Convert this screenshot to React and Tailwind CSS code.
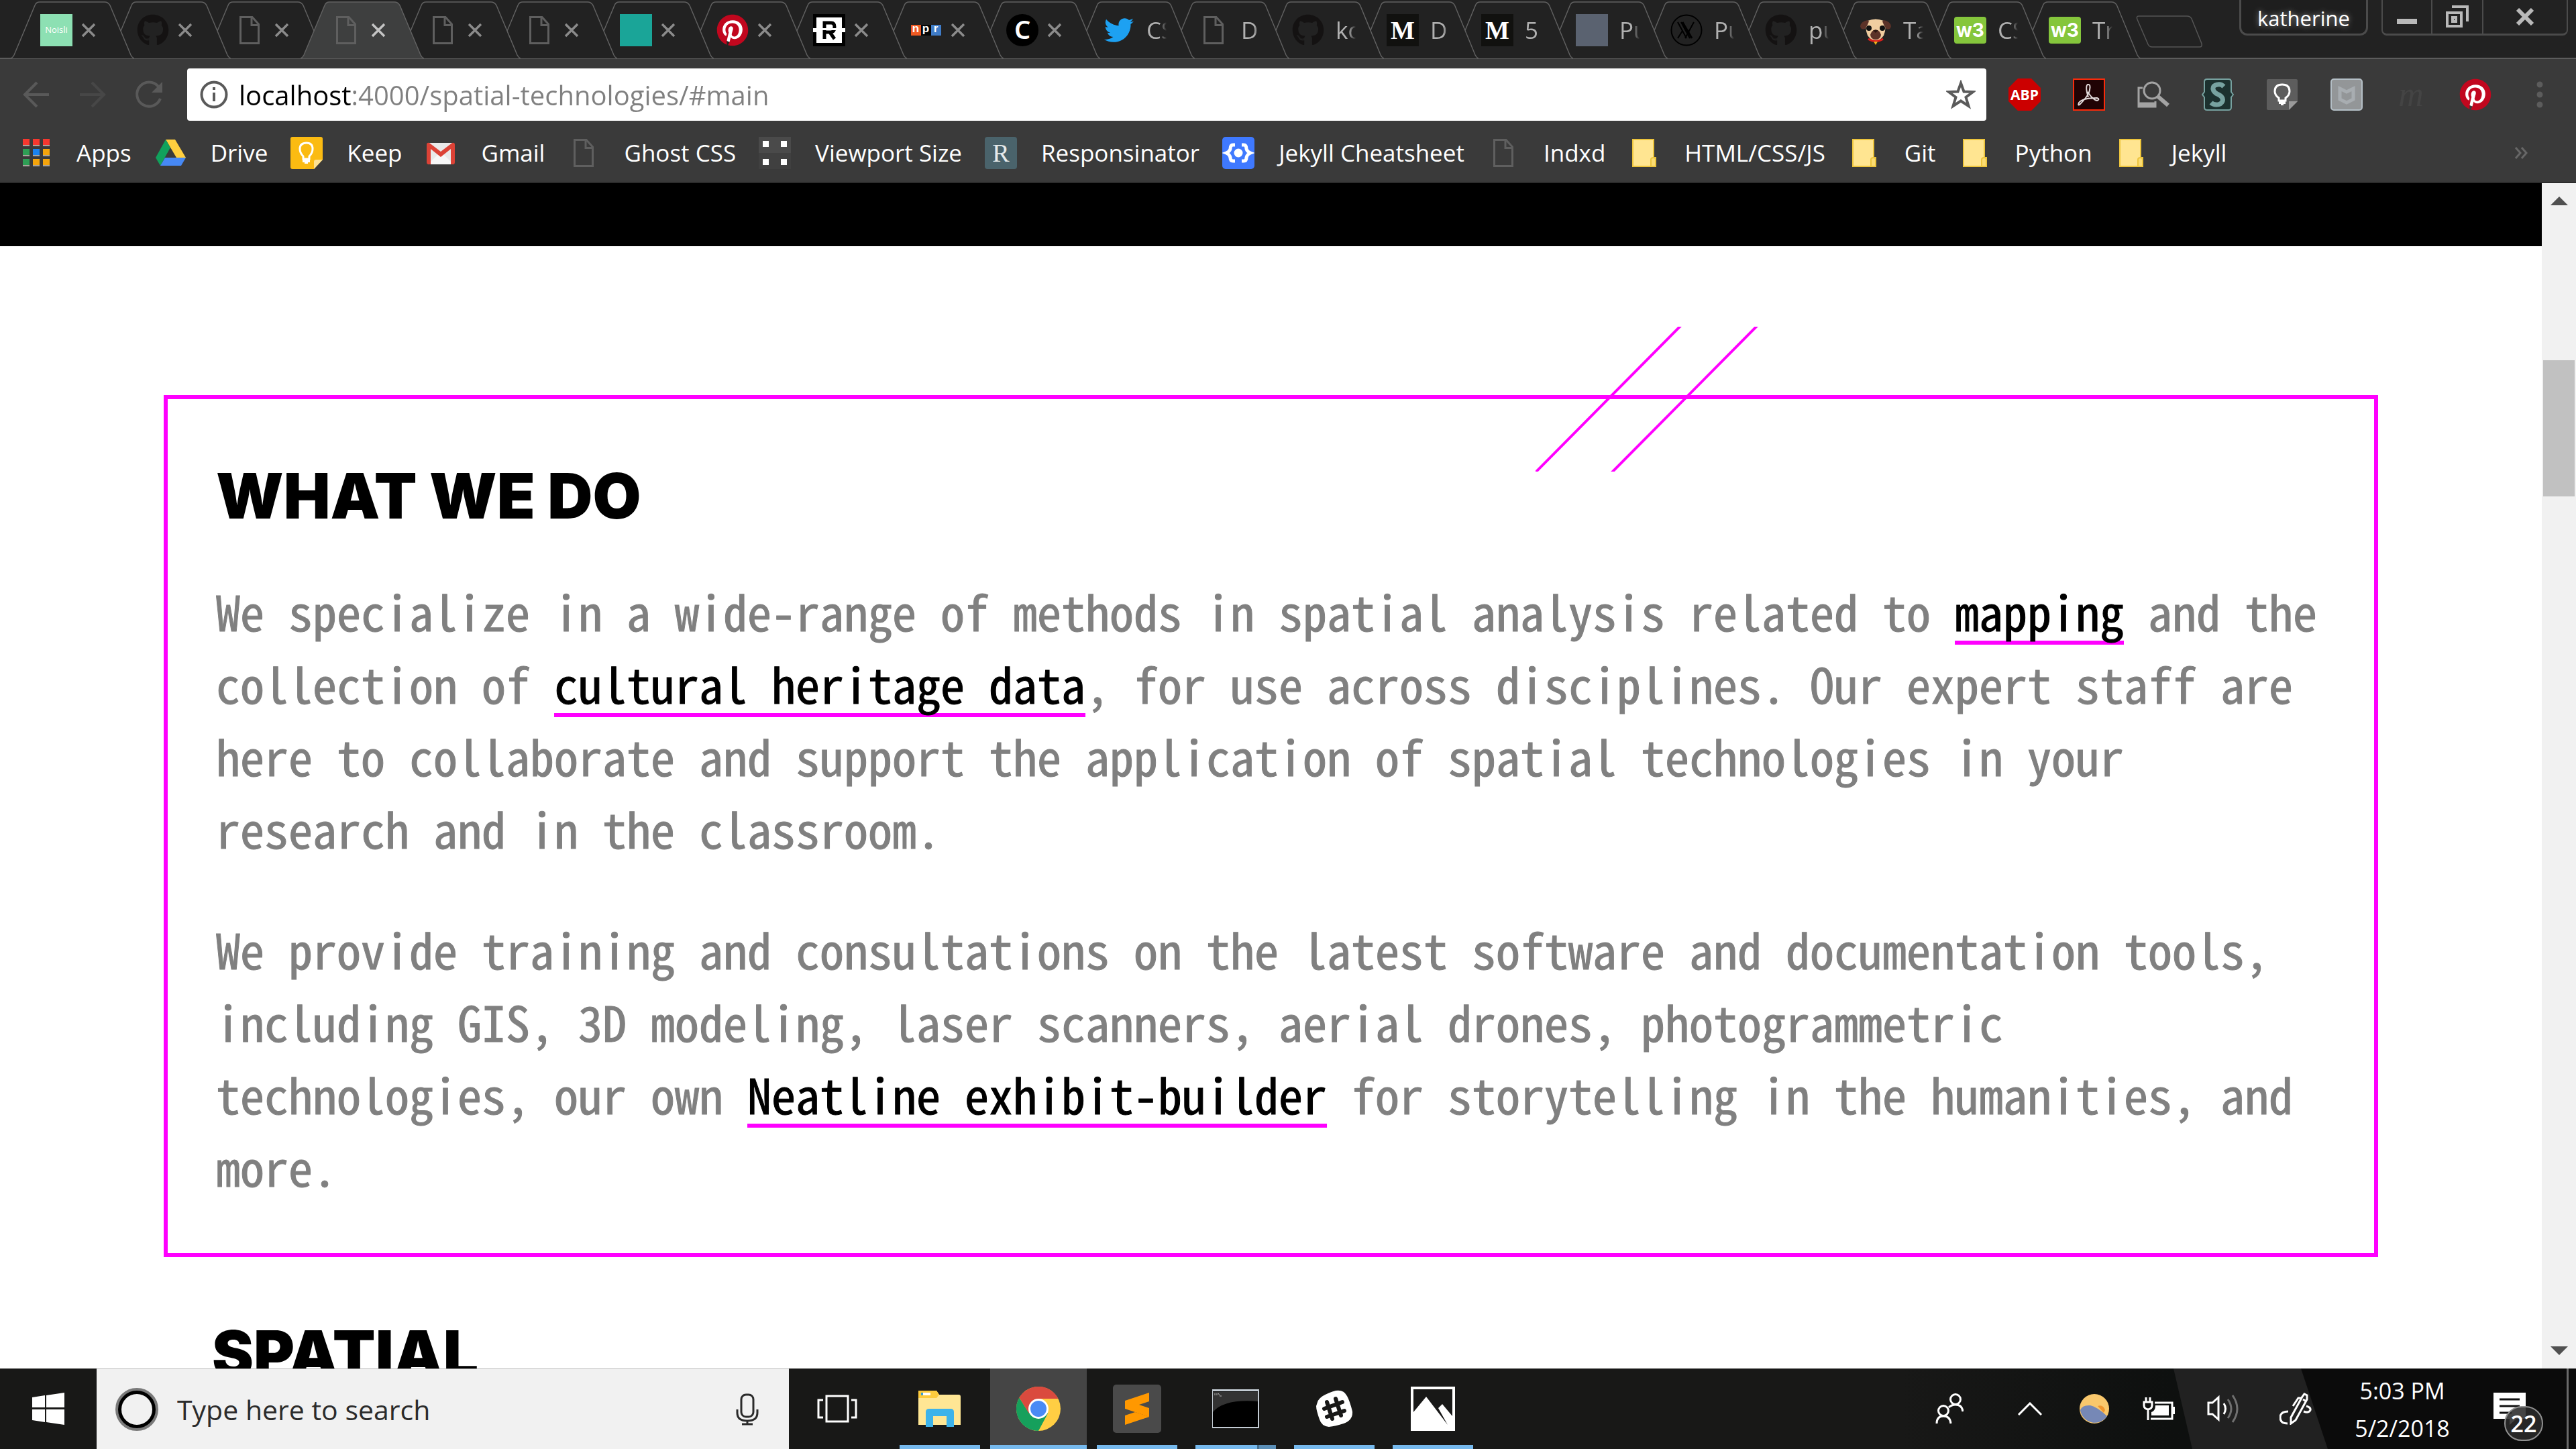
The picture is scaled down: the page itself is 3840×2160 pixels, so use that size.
import React from "react";
import { FaGithub, FaTwitter, FaPinterest } from "react-icons/fa";

/* ---------- favicons ---------- */

const PageIcon = ({ stroke = "#5f5f5f" }) => (
  <svg viewBox="0 0 48 48" className="h-12 w-12" fill="none" stroke={stroke} strokeWidth="3" aria-hidden="true">
    <path d="M10.500 4.500H28L37.500 15V43.500H10.500Z" />
    <path d="M27 4.500V16.500H37.500" />
  </svg>
);

const Github = () => <FaGithub className="h-12 w-12 text-[#141212]" aria-hidden="true" />;

const Noisli = () => (
  <span className="flex h-12 w-12 items-center justify-center bg-[#8de0b3] text-[13px] text-white">Noisli</span>
);

const Teal = () => <span className="block h-12 w-12 bg-[#1aa598]" />;
const Slate = () => <span className="block h-12 w-12 bg-[#5a6270]" />;

const Pinterest = () => (
  <span className="relative flex h-12 w-12 items-center justify-center">
    <span className="absolute inset-1.5 rounded-full bg-white" />
    <FaPinterest className="relative h-12 w-12 text-[#c1071e]" aria-hidden="true" />
  </span>
);

const RLogo = () => (
  <svg viewBox="0 0 48 48" className="h-12 w-12" aria-hidden="true">
    <path d="M0 0H48V48H0Z" fill="#000" />
    <path d="M5 5H43V43H5Z" fill="#fff" />
    <path d="M17 37V13H27Q32 13 32 19Q32 27 26 27H17M25 27L32 37" fill="none" stroke="#000" strokeWidth="5" />
    <path d="M0 21H14V27H0ZM35 21H48V27H35ZM14 21H35V24H14Z" fill="#fff" />
  </svg>
);

const Npr = () => (
  <span className="flex h-12 w-12 items-center justify-center font-['Liberation_Sans'] text-[17px] leading-[14px] font-bold text-white">
    <span className="flex h-4 w-[15px] items-center justify-center bg-[#f05a22] pb-1">n</span>
    <span className="flex h-4 w-[15px] items-center justify-center bg-[#050505] pb-1">p</span>
    <span className="flex h-4 w-[15px] items-center justify-center bg-[#3f7cc8] pb-1">r</span>
  </span>
);

const CLogo = () => (
  <span className="flex h-12 w-12 items-center justify-center rounded-full bg-black pb-1 font-['Noto_Sans'] text-[38px] leading-[40px] font-semibold text-white">
    C
  </span>
);

const Twitter = () => <FaTwitter className="h-11 w-12 text-[#1da1f2]" aria-hidden="true" />;

const Medium = () => (
  <span className="flex h-12 w-12 items-center justify-center bg-[#11110f] font-['Liberation_Serif'] text-[38px] leading-[40px] font-bold text-white">
    M
  </span>
);

const XLogo = () => (
  <svg viewBox="0 0 48 48" className="h-12 w-12" fill="none" stroke="#000" aria-hidden="true">
    <circle cx="24" cy="24" r="22.500" strokeWidth="2" />
    <path d="M11 12L24 36M16 12L29 36M35 12L22 36M11 36L18 25" strokeWidth="2" />
    <path d="M18 12L32 36" strokeWidth="3" />
  </svg>
);

const Pug = () => (
  <svg viewBox="0 0 48 48" className="h-12 w-12" aria-hidden="true">
    <path d="M12 10Q24 5 36 10Q41 20 36 32Q30 40 24 40Q18 40 12 32Q7 20 12 10Z" fill="#f0cda0" />
    <path d="M12 9Q2 11 1 18Q2 24 8 22Q12 17 14 11Z" fill="#5b3228" />
    <path d="M36 9Q46 11 47 18Q46 24 40 22Q36 17 34 11Z" fill="#5b3228" />
    <path d="M24 23Q30 24 32 31Q31 38 24 38Q17 38 16 31Q18 24 24 23Z" fill="#5b3228" />
    <circle cx="14" cy="21" r="4" fill="#111" />
    <circle cx="34" cy="21" r="4" fill="#111" />
    <path d="M20 24H28L24 28Z" fill="#2b1511" />
    <path d="M13 37Q24 44 35 37" fill="none" stroke="#d8201c" strokeWidth="3" />
    <path d="M21 41H27L24 46Z" fill="#f1b21b" />
  </svg>
);

const W3 = () => (
  <span className="flex h-12 w-12 items-center justify-center">
    <span className="flex h-10 w-12 items-center justify-center rounded bg-[#85c63c] font-['Inter'] text-[28px] leading-[36px] font-bold text-white">
      w3
    </span>
  </span>
);

/* ---------- bookmark icons ---------- */

const AppsIcon = () => (
  <svg viewBox="0 0 48 48" className="h-12 w-12" aria-hidden="true">
    {[
      ["#f6382f", "#f6382f", "#f6382f"],
      ["#2f9e55", "#1a83f0", "#f5a40c"],
      ["#2f9e55", "#f5a40c", "#f5a40c"],
    ].map((row, r) =>
      row.map((c, i) => (
        <g key={`${r}-${i}`}>
          <rect x={4 + i * 15} y={3 + r * 15} width="10" height="10" fill={c} />
          <rect x={4 + i * 15} y={12 + r * 15} width="10" height="2" fill="#a9a39c" />
        </g>
      ))
    )}
  </svg>
);

const DriveIcon = () => (
  <svg viewBox="0 0 48 48" className="h-12 w-12" aria-hidden="true">
    <path d="M17 4H31L47 31H33Z" fill="#ffcf3f" />
    <path d="M17 4L24 16L9 43L2 31Z" fill="#11a15c" />
    <path d="M16 31H47L40 43H9Z" fill="#4688f4" />
    <path d="M24 17L32 31H16Z" fill="#3a3a3a" />
  </svg>
);

const KeepIcon = () => (
  <svg viewBox="0 0 48 48" className="h-12 w-12" aria-hidden="true">
    <path d="M3 0H45Q48 0 48 3V34L35 48H3Q0 48 0 45V3Q0 0 3 0Z" fill="#fbbb12" />
    <path d="M48 34L35 48V37Q35 34 38 34Z" fill="#fde293" />
    <path d="M19 29Q14 24 14 18Q14 9 24 9Q33 9 33 18Q33 24 28 29V33H19Z" fill="none" stroke="#fff" strokeWidth="3" />
    <path d="M18 34H29V38H26V40H21V38H18Z" fill="#fff" />
  </svg>
);

const GmailIcon = () => (
  <svg viewBox="0 0 48 48" className="h-12 w-12" aria-hidden="true">
    <path d="M5 9H43V41H5Z" fill="#e9e9e9" />
    <path d="M5 41L20 26H28L43 41Z" fill="#f7f7f7" />
    <path d="M3 12Q3 8 7 9L24 22L41 9Q45 8 45 12V38Q45 41 42 41H39V18L24 30L9 18V41H6Q3 41 3 38Z" fill="#dc4236" />
  </svg>
);

const ViewportIcon = () => (
  <svg viewBox="0 0 48 48" className="h-12 w-12" aria-hidden="true">
    <rect width="48" height="48" fill="#4a4a4a" />
    <rect width="48" height="24" y="24" fill="#404040" />
    <path d="M6 6H15V15H6ZM33 6H42V15H33ZM6 33H15V42H6ZM33 33H42V42H33Z" fill="#fff" />
  </svg>
);

const ResponsinatorIcon = () => (
  <span className="flex h-12 w-12 items-center justify-center rounded bg-[#4a636b] font-['Liberation_Serif'] text-[38px] leading-[48px] text-[#e6eaea]">
    R
  </span>
);

const JekyllIcon = () => (
  <svg viewBox="0 0 48 48" className="h-12 w-12" aria-hidden="true">
    <rect width="48" height="48" rx="5" fill="#3f79ff" />
    <path d="M19 12H16Q12 12 12 18Q11 22 6 24Q11 26 12 31Q12 36 16 36H19M29 12H32Q36 12 36 18Q37 22 42 24Q37 26 36 31Q36 36 32 36H29" fill="none" stroke="#fff" strokeWidth="5" />
    <circle cx="24" cy="24" r="6.500" fill="#fff" />
  </svg>
);

const FolderIcon = () => (
  <svg viewBox="0 0 48 48" className="h-12 w-12" aria-hidden="true">
    <path d="M7 4H38V31H41V44H7Z" fill="#ffe591" stroke="#edc53d" strokeWidth="2" />
    <path d="M34 44V34Q34 31 38 31Q41 31 41 34V44Z" fill="#fbdc73" stroke="#edc53d" strokeWidth="2" />
  </svg>
);

/* ---------- extension icons ---------- */

const AbpIcon = () => (
  <span className="flex h-12 w-12 items-center justify-center bg-[#cc0000] text-[21px] leading-[24px] font-bold text-white [clip-path:polygon(29%_0,71%_0,100%_29%,100%_71%,71%_100%,29%_100%,0_71%,0_29%)]">
    ABP
  </span>
);

const AcrobatIcon = () => (
  <svg viewBox="0 0 48 48" className="h-12 w-12" fill="none" aria-hidden="true">
    <rect x="1" y="1" width="46" height="46" fill="#200304" stroke="#fa2a0a" strokeWidth="2" />
    <path d="M23 28Q18 12 22 9Q27 8 25 17Q24 25 10 39Q7 41 9 36Q14 29 36 29Q41 31 36 33Q30 32 22 20" stroke="#e2dada" strokeWidth="2" />
  </svg>
);

const SearchPageIcon = () => (
  <svg viewBox="0 0 48 48" className="h-12 w-12" fill="none" stroke="#a3a3a3" aria-hidden="true">
    <path d="M8 14H2V42H27V34" strokeWidth="3" />
    <path d="M2 39H27" strokeWidth="7" />
    <circle cx="22" cy="18" r="12" strokeWidth="3" />
    <path d="M31 27L46 40" strokeWidth="6" />
  </svg>
);

const StylishIcon = () => (
  <svg viewBox="0 0 48 48" className="h-12 w-12" fill="none" aria-hidden="true">
    <path d="M8 1H40Q44 1 44 5V20L47 24L44 28V43Q44 47 40 47H8Q4 47 4 43V28L1 24L4 20V5Q4 1 8 1Z" fill="#1c312f" stroke="#77a2a0" strokeWidth="2" />
    <path d="M33 12Q29 8 24 9Q16 10 17 16Q18 21 25 24Q33 28 31 34Q29 39 22 39Q17 39 14 36" stroke="#77a2a0" strokeWidth="7" />
  </svg>
);

const KeepExtIcon = () => (
  <svg viewBox="0 0 48 48" className="h-12 w-12" fill="none" aria-hidden="true">
    <path d="M3 1H45Q47 1 47 3V34L34 47H3Q1 47 1 45V3Q1 1 3 1Z" fill="#5d5d5d" />
    <path d="M47 34L34 47V34Z" fill="#9a9a9a" />
    <path d="M19 29Q13 25 13 19Q13 9 24 9Q35 9 35 19Q35 25 29 29V33H19Z" stroke="#fff" strokeWidth="3" />
    <path d="M19 34H29V38H26V40H22V38H19Z" fill="#fff" />
  </svg>
);

const ShieldIcon = () => (
  <svg viewBox="0 0 48 48" className="h-12 w-12" fill="none" aria-hidden="true">
    <rect x="1" y="1" width="46" height="46" rx="4" fill="#939698" stroke="#b4bfc6" strokeWidth="2" />
    <path d="M14 15L24 20L34 15V31L24 36L14 31Z" stroke="#a8adb1" strokeWidth="5" />
  </svg>
);

const EmIcon = () => (
  <span className="flex h-12 w-12 items-center justify-center font-['Liberation_Serif'] text-[52px] leading-[48px] text-[#444444] italic">m</span>
);

const DotsIcon = () => (
  <svg viewBox="0 0 48 48" className="h-12 w-12" fill="#5c5c5c" aria-hidden="true">
    <circle cx="24" cy="9" r="4.500" />
    <circle cx="24" cy="24" r="4.500" />
    <circle cx="24" cy="39" r="4.500" />
  </svg>
);

/* ---------- tab strip ---------- */

const WIDE = "w-[184px]";
const SLIM = "w-[181px]";

const tabs = [
  { icon: Noisli, name: "Noisli", size: WIDE },
  { icon: Github, name: "GitHub", size: WIDE },
  { icon: PageIcon, name: "Page", size: WIDE },
  { icon: PageIcon, name: "Spatial Technologies", size: WIDE, active: true },
  { icon: PageIcon, name: "Page", size: WIDE },
  { icon: PageIcon, name: "Page", size: WIDE },
  { icon: Teal, name: "Teal", size: WIDE },
  { icon: Pinterest, name: "Pinterest", size: WIDE },
  { icon: RLogo, name: "R", size: WIDE },
  { icon: Npr, name: "NPR", size: WIDE },
  { icon: CLogo, name: "C", size: WIDE },
  { icon: Twitter, title: "CS", size: SLIM },
  { icon: PageIcon, title: "D", size: SLIM },
  { icon: Github, title: "ko", size: SLIM },
  { icon: Medium, title: "D", size: SLIM },
  { icon: Medium, title: "5", size: SLIM },
  { icon: Slate, title: "Pu", size: SLIM },
  { icon: XLogo, title: "Pu", size: SLIM },
  { icon: Github, title: "pu", size: SLIM },
  { icon: Pug, title: "Ta", size: SLIM },
  { icon: W3, title: "CS", size: SLIM },
  { icon: W3, title: "Tr", size: SLIM },
];

function Tab({ tab, index }) {
  const Icon = tab.icon;
  return (
    <button
      type="button"
      aria-label={tab.title ? undefined : tab.name}
      className={`relative -mr-10 flex h-[87px] shrink-0 items-center pt-[3px] pl-11 ${tab.size}`}
      style={{ zIndex: tab.active ? 40 : 30 - index }}
    >
      <svg viewBox="0 0 184 87" preserveAspectRatio="none" className="absolute inset-0 h-full w-full" aria-hidden="true">
        <path
          d="M0 87Q3 86 5 82L36 8Q38 3 43 3H140Q145 3 148 8L179 82Q181 86 184 87"
          fill={tab.active ? "#3e3f3f" : "#222222"}
          stroke="#616161"
          strokeWidth="1.500"
        />
      </svg>
      <span className="relative">
        <Icon />
      </span>
      {tab.title ? (
        <span className="relative ml-[17px] w-[30px] overflow-hidden text-left text-[35px] leading-[48px] whitespace-nowrap text-[#b0b0b0] [mask-image:linear-gradient(to_right,black_65%,transparent)]">
          {tab.title}
        </span>
      ) : (
        <svg viewBox="0 0 22 22" className="relative ml-[13px] h-[22px] w-[22px]" aria-hidden="true">
          <path d="M2 2L20 20M20 2L2 20" stroke={tab.active ? "#c4c4c4" : "#8b8b8b"} strokeWidth="3.500" />
        </svg>
      )}
    </button>
  );
}

function TabStrip() {
  return (
    <div className="flex h-[86px] items-start bg-[#222222] pr-3 pl-4">
      {tabs.map((t, i) => (
        <Tab key={i} tab={t} index={i} />
      ))}
      <button type="button" aria-label="New tab" className="mt-[23px] ml-[33px]">
        <svg viewBox="0 0 100 48" className="h-12 w-[100px]" fill="none" stroke="#555" strokeWidth="1.500" aria-hidden="true">
          <path d="M4 1H76Q81 1 83 5L98 42Q99 47 95 47H24Q20 47 18 43L2 6Q0 1 4 1Z" />
        </svg>
      </button>
      <button
        type="button"
        className="ml-auto flex h-[53px] w-[192px] items-center justify-center rounded-b-xl border-x-3 border-b-3 border-[#4b4b4b] bg-[#1e1e1e] pt-1 text-[31px] leading-[40px] text-white [text-shadow:0_0_8px_#999]"
      >
        katherine
      </button>
      <div className="ml-5 flex h-[53px] w-[278px] rounded-b-lg border-x-2 border-b-3 border-[#4b4b4b]">
        <button type="button" aria-label="Minimize" className="flex w-[74px] items-end justify-center border-r-2 border-[#4b4b4b] pb-3.5">
          <span className="h-2 w-[30px] bg-[#b9b9b9]" />
        </button>
        <button type="button" aria-label="Restore" className="flex w-[76px] items-center justify-center border-r-2 border-[#4b4b4b]">
          <svg viewBox="0 0 36 34" className="h-[34px] w-9" fill="none" stroke="#b9b9b9" strokeWidth="4" aria-hidden="true">
            <path d="M10 2H33V24M3 11H24V31H3ZM11 18H16V24H11Z" />
          </svg>
        </button>
        <button type="button" aria-label="Close" className="flex flex-1 items-center justify-center">
          <svg viewBox="0 0 28 26" className="h-[26px] w-7" stroke="#b9b9b9" strokeWidth="6" aria-hidden="true">
            <path d="M3 2L25 24M25 2L3 24" />
          </svg>
        </button>
      </div>
    </div>
  );
}

/* ---------- toolbar ---------- */

const extensions = [
  ["Adblock Plus", AbpIcon],
  ["Acrobat", AcrobatIcon],
  ["Page search", SearchPageIcon],
  ["Stylish", StylishIcon],
  ["Keep", KeepExtIcon],
  ["Shield", ShieldIcon],
  ["Em", EmIcon],
  ["Pinterest", Pinterest],
];

const bookmarks = [
  ["Apps", AppsIcon],
  ["Drive", DriveIcon],
  ["Keep", KeepIcon],
  ["Gmail", GmailIcon],
  ["Ghost CSS", PageIcon],
  ["Viewport Size", ViewportIcon],
  ["Responsinator", ResponsinatorIcon],
  ["Jekyll Cheatsheet", JekyllIcon],
  ["Indxd", PageIcon],
  ["HTML/CSS/JS", FolderIcon],
  ["Git", FolderIcon],
  ["Python", FolderIcon],
  ["Jekyll", FolderIcon],
];

function Toolbar() {
  return (
    <div className="border-t-2 border-b-2 border-t-[#5c5c5c] border-b-[#2c2c2c] bg-[#3a3a3a] pt-3.5 pb-[19px]">
      <div className="flex h-[78px] items-center">
        <div className="flex w-[279px] items-center gap-9 pl-[30px]">
          <button type="button" aria-label="Back">
            <svg viewBox="0 0 48 48" className="h-12 w-12" fill="none" stroke="#595959" strokeWidth="4" aria-hidden="true">
              <path d="M43 24H7M25 6L7 24L25 42" />
            </svg>
          </button>
          <button type="button" aria-label="Forward">
            <svg viewBox="0 0 48 48" className="h-12 w-12" fill="none" stroke="#474747" strokeWidth="4" aria-hidden="true">
              <path d="M5 24H41M23 6L41 24L23 42" />
            </svg>
          </button>
          <button type="button" aria-label="Reload">
            <svg viewBox="0 0 48 48" className="h-12 w-12" fill="none" stroke="#595959" strokeWidth="4" aria-hidden="true">
              <path d="M38 12A18 18 0 1 0 41 30" />
              <path d="M44 5V21H28Z" fill="#595959" stroke="none" />
            </svg>
          </button>
        </div>
        <div className="flex h-full flex-1 items-center rounded-sm bg-white pr-4 pl-[19px]">
          <svg viewBox="0 0 42 42" className="h-[42px] w-[42px]" aria-hidden="true">
            <circle cx="21" cy="21" r="18.500" fill="none" stroke="#5a5a5a" strokeWidth="4" />
            <path d="M19 10H23V14H19ZM19 18H23V31H19Z" fill="#5a5a5a" />
          </svg>
          <input
            type="text"
            aria-label="Address"
            defaultValue="localhost:4000/spatial-technologies/#main"
            className="ml-4 h-full min-w-0 flex-1 bg-[linear-gradient(to_right,#000_169px,#808080_169px)] bg-clip-text text-[40px] text-transparent outline-none"
          />
          <button type="button" aria-label="Bookmark this page">
            <svg viewBox="0 0 44 44" className="h-11 w-11" fill="none" stroke="#5a5a5a" strokeWidth="4" aria-hidden="true">
              <path d="M22 5L26.500 17.500L40 18L29.500 26L33.500 39L22 31.500L10.500 39L14.500 26L4 18L17.500 17.500Z" />
            </svg>
          </button>
        </div>
        <div className="flex items-center gap-12 pr-[30px] pl-[33px]">
          {extensions.map(([name, Icon]) => (
            <button key={name} type="button" aria-label={name}>
              <Icon />
            </button>
          ))}
          <button type="button" aria-label="Menu">
            <DotsIcon />
          </button>
        </div>
      </div>
      <nav className="mt-6 flex h-12 items-center gap-[34px] pr-[72px] pl-[30px] text-[35px] leading-[48px] text-white">
        {bookmarks.map(([name, Icon]) => (
          <a key={name} href="#main" className="flex items-center gap-9 whitespace-nowrap">
            <Icon />
            {name}
          </a>
        ))}
        <button type="button" aria-label="More bookmarks" className="ml-auto">
          <svg viewBox="0 0 20 18" className="h-[18px] w-5" fill="none" stroke="#676767" strokeWidth="3" aria-hidden="true">
            <path d="M2 1L9 9L2 17M11 1L18 9L11 17" />
          </svg>
        </button>
      </nav>
    </div>
  );
}

/* ---------- page ---------- */

const Mark = ({ children }) => (
  <a
    href="#main"
    className="text-black underline decoration-[#ff00ff] decoration-6 underline-offset-[14px] [-webkit-text-stroke:1px_#000] [text-decoration-skip-ink:none]"
  >
    {children}
  </a>
);

function Page() {
  return (
    <div className="flex min-h-0 flex-1 bg-white">
      <main id="main" className="min-w-0 flex-1 overflow-hidden">
        <div className="h-[94px] bg-black" />
        <section className="relative mx-[244px] mt-[222px] border-6 border-[#ff00ff] px-[72px] pt-[98px] pb-[76px]">
          <svg
            viewBox="1 0 336 216"
            className="absolute -top-[108px] left-[62%] h-[216px] w-[336px]"
            stroke="#ff00ff"
            strokeWidth="4"
            aria-hidden="true"
          >
            <path d="M-2 220L220 -4M112 220L334 -4" />
          </svg>
          <h2 className="font-['Inter'] text-[93px] leading-[93px] font-black text-black">WHAT WE DO</h2>
          <div className="mt-[70px] space-y-[72px] font-['Noto_Sans_Mono_CJK_JP','Noto_Sans_CJK_JP',monospace] text-[72px] leading-[108px] text-[#808080] [-webkit-text-stroke:1px_#808080]">
            <p>
              We specialize in a wide-range of methods in spatial analysis related to <Mark>mapping</Mark> and the
              collection of <Mark>cultural heritage data</Mark>, for use across disciplines. Our expert staff are here to
              collaborate and support the application of spatial technologies in your research and in the classroom.
            </p>
            <p>
              We provide training and consultations on the latest software and documentation tools, including GIS, 3D
              modeling, laser scanners, aerial drones, photogrammetric technologies, our own{" "}
              <Mark>Neatline exhibit-builder</Mark> for storytelling in the humanities, and more.
            </p>
          </div>
        </section>
        <h2 className="mx-[244px] mt-[97px] pl-[72px] font-['Inter'] text-[93px] leading-[93px] font-black text-black">SPATIAL</h2>
      </main>
      <div className="flex w-[51px] flex-col bg-[#f1f1f1]">
        <button type="button" aria-label="Scroll up" className="flex h-[53px] items-center justify-center">
          <svg viewBox="0 0 26 13" className="h-[13px] w-[26px]" fill="#505050" aria-hidden="true">
            <path d="M13 0L26 13H0Z" />
          </svg>
        </button>
        <div className="flex-1 px-0.5 pt-[211px]">
          <div className="h-[203px] bg-[#c1c1c1]" />
        </div>
        <button type="button" aria-label="Scroll down" className="flex h-[53px] items-center justify-center">
          <svg viewBox="0 0 26 13" className="h-[13px] w-[26px]" fill="#505050" aria-hidden="true">
            <path d="M0 0H26L13 13Z" />
          </svg>
        </button>
      </div>
    </div>
  );
}

/* ---------- taskbar ---------- */

const ExplorerIcon = () => (
  <svg viewBox="0 0 72 72" className="h-[72px] w-[72px]" aria-hidden="true">
    <path d="M4 9Q4 9 6 9H31L35 15H64Q67 15 67 18V60H4Z" fill="#ffe694" />
    <path d="M4 9H31L35 15L31 20H4Z" fill="#fdcb3d" />
    <path d="M8 12H22V16H8Z" fill="#fff" />
    <path d="M8 12H11V16H8Z" fill="#3a9fd0" />
    <path d="M15 63V41Q15 36 20 36H52Q57 36 57 41V63H46V47H26V63Z" fill="#3db3ea" />
  </svg>
);

const ChromeIcon = () => (
  <svg viewBox="0 0 66 66" className="h-[66px] w-[66px]" aria-hidden="true">
    <circle cx="33" cy="33" r="33" fill="#ffce43" />
    <path d="M4.400 16.500A33 33 0 0 0 33 66L47 40L33 33L18 38Z" fill="#16a05c" />
    <path d="M4.400 16.500A33 33 0 0 1 62.500 18H33L19 40Z" fill="#da4a3e" />
    <circle cx="33" cy="33" r="15" fill="#fff" />
    <circle cx="33" cy="33" r="12" fill="#4a8af5" />
  </svg>
);

const SublimeIcon = () => (
  <svg viewBox="0 0 72 72" className="h-[72px] w-[72px]" aria-hidden="true">
    <rect width="72" height="72" rx="5" fill="#4a4a4a" />
    <path d="M18 24L54 12V25L39 30L54 35V48L18 36Z" fill="#ff9800" />
    <path d="M33 41L54 48L44 51Z" fill="#f08c00" />
    <path d="M18 46L33 41L54 48L18 60Z" fill="#ff9800" />
  </svg>
);

const TerminalIcon = () => (
  <svg viewBox="0 0 70 58" className="h-[58px] w-[70px]" aria-hidden="true">
    <rect width="70" height="58" fill="#c4ccd4" />
    <rect x="1" y="3" width="67" height="53" fill="#000" />
    <path d="M1 4H68V18Q18 14 1 34Z" fill="#333" />
    <path d="M4 6V9M7 6V9M9 6L11 9M11 10H14" stroke="#bbb" strokeWidth="1" />
  </svg>
);

const SlackIcon = () => (
  <svg viewBox="0 0 56 56" className="h-14 w-14" aria-hidden="true">
    <path d="M3 18Q6 8 30 1Q42-1 47 9Q51 16 55 32Q56 45 42 50Q30 54 20 55Q9 54 6 44Q1 30 1 24Z" fill="#fff" />
    <path d="M17 18L25 43M30 13L38 38M13 28L40 18M17 40L43 31" stroke="#181817" strokeWidth="6" strokeLinecap="round" />
  </svg>
);

const PhotosIcon = () => (
  <svg viewBox="0 0 66 66" className="h-[66px] w-[66px]" aria-hidden="true">
    <rect width="66" height="66" fill="#fff" />
    <path d="M4 4H62V44L47 26L41 32L55 57L23 15L4 38Z" fill="#181817" />
  </svg>
);

const apps = [
  ["File Explorer", ExplorerIcon],
  ["Chrome", ChromeIcon],
  ["Sublime Text", SublimeIcon],
  ["Command Prompt", TerminalIcon],
  ["Slack", SlackIcon],
  ["Photos", PhotosIcon],
];

const TrayButton = ({ label, width = "w-24", children }) => (
  <button type="button" aria-label={label} className={`flex h-full items-center justify-center ${width}`}>
    {children}
  </button>
);

function Tray() {
  const line = { fill: "none", stroke: "#fff", strokeWidth: 3, "aria-hidden": true };
  return (
    <div className="relative ml-auto flex h-full items-center bg-linear-to-r from-[#181817] to-[#0e100f] to-40%">
      <svg viewBox="0 0 606 120" preserveAspectRatio="none" className="absolute top-0 right-0 h-full w-[606px]" aria-hidden="true">
        <path d="M190 0H606V120H230Z" fill="#0b0b0b" />
        <path d="M6 0H196L236 120H34Z" fill="#212121" />
      </svg>
      <div className="relative flex h-full items-center">
        <TrayButton label="People" width="w-36">
          <svg viewBox="0 0 42 46" className="h-[46px] w-[42px]" {...line}>
            <circle cx="30" cy="9" r="7.500" />
            <circle cx="12" cy="26" r="7.500" />
            <path d="M2 45Q2 34 12 34Q22 34 23 45M20 21Q24 17 30 17Q40 17 41 27" />
          </svg>
        </TrayButton>
        <TrayButton label="Show hidden icons">
          <svg viewBox="0 0 38 20" className="h-5 w-[38px]" {...line}>
            <path d="M2 19L19 2L36 19" />
          </svg>
        </TrayButton>
        <TrayButton label="Display tint">
          <svg viewBox="0 0 44 44" className="h-11 w-11" aria-hidden="true">
            <circle cx="22" cy="22" r="22" fill="#f9c86c" />
            <path d="M27 18Q35 15 38 24L36 28Z" fill="#f0962e" />
            <path d="M1 24Q4 16 16 17Q26 19 41 33A22 22 0 0 1 1 24Z" fill="#7688b6" />
          </svg>
        </TrayButton>
        <TrayButton label="Battery">
          <svg viewBox="0 0 48 34" className="h-[34px] w-12" {...line}>
            <path d="M18 8H44V32H12" />
            <path d="M20 12H39V27H13V22Q19 20 19 12Z" fill="#fff" stroke="none" />
            <path d="M44 14H48V25H44" fill="#fff" stroke="none" />
            <path d="M5 0V7M11 0V7M2 7H14V12Q14 17 8 18Q2 17 2 12ZM8 18V34" />
          </svg>
        </TrayButton>
        <TrayButton label="Volume">
          <svg viewBox="0 0 48 44" className="h-11 w-12" {...line}>
            <path d="M2 13H8L17 5V38L8 30H2Z" />
            <path d="M25 14Q30 22 25 30" />
            <path d="M31 8Q41 22 31 36M38 2Q52 22 38 42" stroke="#707070" />
          </svg>
        </TrayButton>
        <TrayButton label="Windows Ink" width="w-[120px]">
          <svg viewBox="0 0 48 48" className="h-12 w-12" {...line}>
            <path d="M34 6L17 37V46L24 41L41 10V4L37 2ZM20 20L28 8L33 8M35 10L40 13M13 28Q1 28 1 37Q1 46 12 46M40 20Q47 22 46 26Q44 31 36 28" />
          </svg>
        </TrayButton>
        <div className="w-[198px] pt-0.5 text-center text-[34px] leading-[56px] text-white">
          <div>5:03 PM</div>
          <div>5/2/2018</div>
        </div>
        <button type="button" aria-label="22 notifications" className="relative flex h-full w-[122px] items-center justify-center">
          <svg viewBox="0 0 48 48" className="h-12 w-12" aria-hidden="true">
            <path d="M0 0H48V39H34L24 48V39H0Z" fill="#fff" />
            <path d="M9 10H39M9 20H39M9 30H27" stroke="#111" strokeWidth="3" />
          </svg>
          <span className="absolute top-14 left-[53px] flex h-[52px] w-[58px] items-center justify-center rounded-full border-2 border-[#909090] bg-[#2a2a2ae0] text-[34px] leading-[40px] font-semibold text-white">
            22
          </span>
        </button>
        <button type="button" aria-label="Show desktop" className="ml-6 h-full w-3.5 border-l-3 border-[#6a6a6a]" />
      </div>
    </div>
  );
}

function Taskbar() {
  return (
    <div className="flex h-[120px] items-center bg-[#181817]">
      <button type="button" aria-label="Start" className="flex h-full w-36 items-center justify-center">
        <svg viewBox="0 0 48 48" className="h-12 w-12" fill="#fff" aria-hidden="true">
          <path d="M0 7L19 4V22H0ZM21 4L48 0V22H21ZM0 25H19V44L0 41ZM21 25H48V48L21 44Z" />
        </svg>
      </button>
      <label className="flex h-full w-[1032px] items-center border-t border-[#b5b5b5] bg-[#f1f1f1] pr-[38px] pl-7">
        <svg viewBox="0 0 64 64" className="h-16 w-16" fill="none" aria-hidden="true">
          <circle cx="32" cy="32" r="29" stroke="#7a7a7a" strokeWidth="6" />
          <circle cx="32" cy="32" r="25.500" stroke="#000" strokeWidth="5" />
        </svg>
        <input
          type="text"
          aria-label="Search"
          placeholder="Type here to search"
          className="ml-7 min-w-0 flex-1 bg-transparent text-[41px] leading-[56px] outline-none placeholder:text-[#2b2b2b]"
        />
        <svg viewBox="0 0 48 48" className="h-12 w-12" fill="none" stroke="#2b2b2b" strokeWidth="3" aria-hidden="true">
          <rect x="15" y="2" width="18" height="33" rx="7" />
          <path d="M9 24V29Q9 41 24 41Q39 41 39 29V24M24 41V46M16 46H32" />
        </svg>
      </label>
      <button type="button" aria-label="Task view" className="flex h-full w-36 items-center justify-center">
        <svg viewBox="0 0 60 42" className="h-[42px] w-[60px]" fill="none" stroke="#fff" strokeWidth="3" aria-hidden="true">
          <path d="M14 2H46V40H14ZM9 8H2V34H9M51 8H58V34H51" />
        </svg>
      </button>
      <div className="ml-[9px] flex h-full gap-[3px]">
        {apps.map(([name, Icon]) => (
          <button
            key={name}
            type="button"
            aria-label={name}
            className={`flex h-full w-36 flex-col items-center ${name === "Chrome" ? "bg-[#454545]" : ""}`}
          >
            <span className="flex flex-1 items-center pt-1.5">
              <Icon />
            </span>
            <span className={`flex h-1.5 justify-end bg-[#76b9ed] ${name === "Chrome" ? "w-full" : "w-[120px]"}`}>
              {name === "Command Prompt" && <span className="h-full w-7 border-l-3 border-[#46708f] bg-[#5b8fb8]" />}
            </span>
          </button>
        ))}
      </div>
      <Tray />
    </div>
  );
}

export default function App() {
  return (
    <div className="flex h-screen flex-col overflow-hidden font-['Open_Sans','Noto_Sans',sans-serif]">
      <header>
        <TabStrip />
        <Toolbar />
      </header>
      <Page />
      <Taskbar />
    </div>
  );
}
